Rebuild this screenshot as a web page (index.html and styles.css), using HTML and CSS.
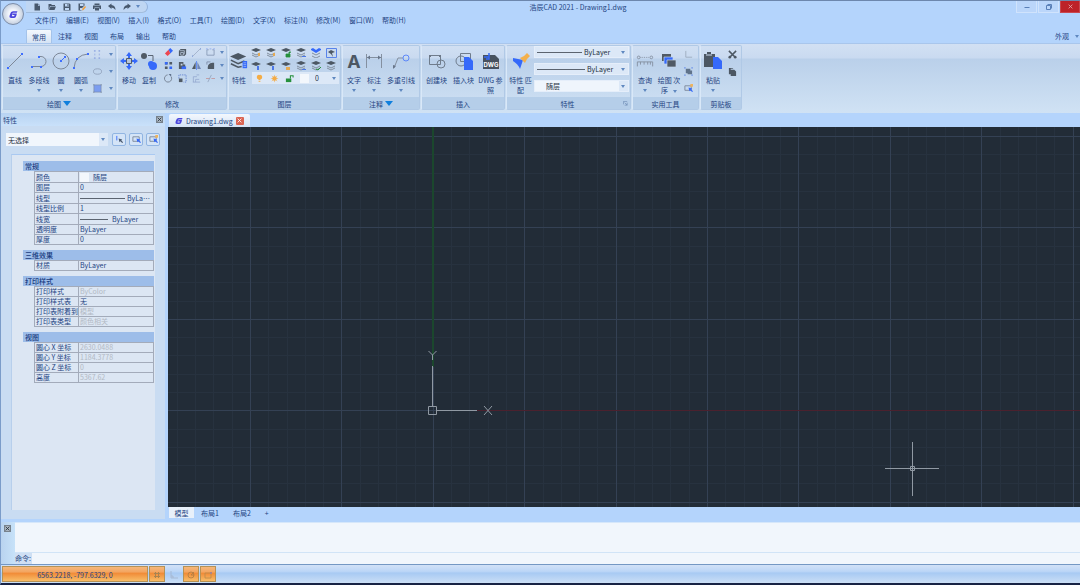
FILE: index.html
```html
<!DOCTYPE html>
<html lang="zh-CN">
<head>
<meta charset="utf-8">
<title>浩辰CAD 2021 - Drawing1.dwg</title>
<link rel="stylesheet" href="styles.css">
</head>
<body>
<svg class="sprite" aria-hidden="true">
  <symbol id="arrow" viewBox="0 0 4 3"><path d="M0 0h4L2 3z" fill="#5f88c0"/></symbol>
  <symbol id="expand" viewBox="0 0 8 5"><path d="M0 0h8L4 5z" fill="#0f7fdd"/></symbol>
  <symbol id="logo" viewBox="0 0 16 16"><path d="M15 2H7Q3 2 2 7L1 10q-1 4 3 4h5q3 0 4-4l1-4H7L6 9h4l-1 2H5l1-4q0-2 2-2h6z" fill="#4a45dc"/></symbol>
  <symbol id="close" viewBox="0 0 8 8"><path d="M1 1l6 6M7 1L1 7" fill="none" stroke="currentColor" stroke-width="1.3"/></symbol>
  <symbol id="new" viewBox="0 0 16 16"><path d="M3 1h7v5h4v9H3zM11 1l3 4h-3z"/></symbol>
  <symbol id="open" viewBox="0 0 16 16"><path d="M1 2h5l2 2h6v2H4l-2 7H1zM5 7h11l-3 7H2z"/></symbol>
  <symbol id="save" viewBox="0 0 16 16"><path d="M1 1h12l2 2v12H1zM4 2v5h8V2zM4 10v4h8v-4z" fill-rule="evenodd"/><path d="M9 2h2v4H9z"/></symbol>
  <symbol id="saveas" viewBox="0 0 16 16"><path d="M1 1h12v4L8 10H4v4h3v1H1zM4 2v4h7V2z" fill-rule="evenodd"/><path d="M8 15l1-4 5-5 2 2-5 6z" fill="#f0a040"/></symbol>
  <symbol id="print" viewBox="0 0 16 16"><path d="M3 1h10v3H3zM0 5h16v7h-3V9H3v3H0zM4 10h8v5H4z"/></symbol>
  <symbol id="undo" viewBox="0 0 16 16"><path d="M0 6l7-5v3q8 1 8 10-3-5-8-5v3z"/></symbol>
  <symbol id="redo" viewBox="0 0 16 16"><path d="M16 6L9 1v3Q1 5 1 14q3-5 8-5v3z"/></symbol>
  <symbol id="line" viewBox="0 0 18 18"><path d="M2 16L16 2" fill="none" stroke="#7d8898"/><path d="M1 15h2v2H1zM15 1h2v2h-2z" fill="#3f6fff"/></symbol>
  <symbol id="pline" viewBox="0 0 18 18"><path d="M2 14.500h9a5 5 0 0 0 0-10H9" fill="none" stroke="#7d8898"/><path d="M1 14h2v2H1zM8 4h2v2H8zM10 14h2v2h-2z" fill="#3f6fff"/></symbol>
  <symbol id="circle" viewBox="0 0 18 18"><circle cx="9" cy="9" r="8" fill="none" stroke="#7d8898"/><path d="M9 9l4-4" stroke="#3f6fff"/><path d="M8 8h2v2H8zM12 4h2v2h-2z" fill="#3f6fff"/></symbol>
  <symbol id="arc" viewBox="0 0 18 18"><path d="M2 16Q3 3 16 2" fill="none" stroke="#7d8898"/><path d="M1 15h2v2H1zM4 6h2v2H4zM15 1h2v2h-2z" fill="#3f6fff"/></symbol>
  <symbol id="points" viewBox="0 0 10 10"><path d="M2 0v2m0 2v2m0 2v2M7 0v2m0 2v2m0 2v2M1 1h2m3 0h2M1 9h2m3 0h2" stroke="#8ca3e0" fill="none" stroke-width=".8"/></symbol>
  <symbol id="ellipse" viewBox="0 0 10 10"><ellipse cx="5" cy="5" rx="4.500" ry="3" fill="none" stroke="#8695b0" stroke-width=".8"/></symbol>
  <symbol id="hatch" viewBox="0 0 10 10"><path d="M1 1h8v8H1z" fill="#7b9df0"/><path d="M0 1h10M0 9h10M1 0v10M9 0v10" stroke="#7b8aa4" stroke-width=".7"/></symbol>
  <symbol id="move" viewBox="0 0 18 18"><path d="M9 0l3 4h-2v3H8V4H6zM9 18l3-4h-2v-3H8v3H6zM0 9l4-3v2h3v2H4v2zM18 9l-4-3v2h-3v2h3v2z" fill="#3569fa"/><path d="M6.500 6.500h5v5h-5z" fill="#b8c6d9" stroke="#505b69"/></symbol>
  <symbol id="copy" viewBox="0 0 18 18"><circle cx="4" cy="4" r="3" fill="#505a65"/><path d="M8 3.500h5V9" fill="none" stroke="#5a6574"/><circle cx="11" cy="12" r="3" fill="#3569fa"/><circle cx="13" cy="14" r="4" fill="#3569fa"/></symbol>
  <symbol id="erase" viewBox="0 0 10 10"><path d="M5 2l2-2 3 3-3 3z" fill="#3569fa"/><path d="M5 2l2 4-3 3-3-3z" fill="#ed4751"/></symbol>
  <symbol id="box" viewBox="0 0 10 10"><path d="M1 3l2-2h6v6L7 9H1z" fill="#505a65"/><path d="M3 5h3v3H3zM2 3h5v4" fill="none" stroke="#c4d4e8" stroke-width=".8"/></symbol>
  <symbol id="dash" viewBox="0 0 10 10"><path d="M1 9L9 1" stroke="#97a6bf" stroke-width=".8"/><path d="M0 8h1v2H0zM9 0h1v2H9z" fill="#89a4d8"/></symbol>
  <symbol id="bracket" viewBox="0 0 10 10"><path d="M3 2H1v6h8V2H7" stroke="#8a9cb8" fill="none"/><path d="M4 1h2M0 1h2M8 1h2" stroke="#8facf0"/></symbol>
  <symbol id="array" viewBox="0 0 10 10"><path d="M1 1h3v3H1zM6 1h3v3H6zM1 6h3v3H1z" fill="#505a65"/><path d="M6 6h3v3H6zM1 1h3v3H1z" fill="#3569fa"/></symbol>
  <symbol id="align" viewBox="0 0 10 10"><path d="M1 1h5v3h2v5H1z" fill="#505a65"/><path d="M4 6h5v3H4z" fill="#3569fa"/><path d="M3 3h2v2H3z" fill="#c5d4e5"/></symbol>
  <symbol id="mirror" viewBox="0 0 10 10"><path d="M4 1v8H0z" fill="#505a65"/><path d="M6 1v8h4z" fill="#7187b5"/><path d="M5 0v10" stroke="#3569fa" stroke-width=".7"/></symbol>
  <symbol id="fillet" viewBox="0 0 10 10"><path d="M2 9V7q0-4 5-5h2v7z" fill="#505a65"/><path d="M1 4V1h4" fill="none" stroke="#8090aa"/></symbol>
  <symbol id="rotate" viewBox="0 0 10 10"><path d="M4 1a4 4 0 1 0 4 2" fill="none" stroke="#6b7686" stroke-width=".9"/><path d="M5 0h3v3z" fill="#60728c"/></symbol>
  <symbol id="scale" viewBox="0 0 10 10"><path d="M1 5V1h8v8H6" fill="none" stroke="#6382cf" stroke-dasharray="1.500 1"/><path d="M1 5h4v4H1z" fill="#505a65"/></symbol>
  <symbol id="offset" viewBox="0 0 10 10"><path d="M1.500 9V3h4M4 9V6h4M1 9h8M5 1h3" stroke="#8fa3cd" fill="none" stroke-width=".8"/></symbol>
  <symbol id="trim" viewBox="0 0 10 10"><path d="M0 5h4m2 0h4" stroke="#c2898c" stroke-width=".8"/><path d="M2 9L6 1" stroke="#8c9cb5" stroke-width=".8"/></symbol>
  <symbol id="layers" viewBox="0 0 20 18"><path d="M9 0l9 4-9 4-9-4z" fill="#4c5763"/><path d="M1 8l8 4 7-3M1 12l8 4 4-1" fill="none" stroke="#4c5763" stroke-width="1.700"/><path d="M14 9h5v8h-5z" fill="#3569fa"/><path d="M15 11h3m-3 2h3m-3 2h3" stroke="#b7cef2" stroke-width=".7"/></symbol>
  <symbol id="stack" viewBox="0 0 11 10"><path d="M5 0l5 2-5 2-5-2z" fill="#4c5763"/><path d="M1 5l4 2 4-2M1 7l4 2 4-2" fill="none" stroke="#7b8795" stroke-width=".9"/></symbol>
  <symbol id="stack-y" viewBox="0 0 11 10"><use href="#stack"/><path d="M7 5h2v3H7z" fill="#e4aa55"/></symbol>
  <symbol id="stack-g" viewBox="0 0 11 10"><path d="M5 0l5 2-5 2-5-2z" fill="#4c5763"/><path d="M5 6h4v3H5zM8 6V4h2" fill="#26903d" stroke="#26903d" stroke-width=".8"/></symbol>
  <symbol id="stack-b" viewBox="0 0 11 10"><use href="#stack"/><path d="M6 8.500h4" stroke="#4b77e8"/></symbol>
  <symbol id="stack-c" viewBox="0 0 11 10"><use href="#stack"/><path d="M5 8l2 1 3-3" fill="none" stroke="#26903d"/></symbol>
  <symbol id="stack-w" viewBox="0 0 11 10"><path d="M1 5l4 2 4-2M1 8l4 2 4-2" fill="none" stroke="#7b8795" stroke-width=".9"/><path d="M0 1l2-1 3 2 3-2 2 1v1L5 5 0 2z" fill="#3569fa"/></symbol>
  <symbol id="layer-frame" viewBox="0 0 11 10"><path d="M.5.500h10v9H.5z" fill="#c8d9ef" stroke="#5983eb"/><path d="M5 2l4 2-3 1 1 4-2-3-3-2z" fill="#4c5763"/></symbol>
  <symbol id="layer-one" viewBox="0 0 11 10"><path d="M5 1l5 2-5 2-5-2z" fill="#4c5763"/><path d="M6 5h2v4H6z" fill="#4b77e8"/></symbol>
  <symbol id="layer-lock" viewBox="0 0 11 10"><path d="M5 1l5 2-5 2-5-2z" fill="#4c5763"/><path d="M5 6h4v3H5z" fill="#e4aa55"/></symbol>
  <symbol id="bulb" viewBox="0 0 10 10"><path d="M5 1a2.500 2.500 0 0 1 1 5v1H4V6a2.500 2.500 0 0 1 1-5zM4 8h2v1H4z" fill="#f4ac45"/></symbol>
  <symbol id="sun" viewBox="0 0 10 10"><circle cx="5" cy="5" r="2.500" fill="#f4ac45"/><path d="M5 1v8M1 5h8M2 2l6 6M8 2L2 8" stroke="#f4ac45" stroke-width=".6"/></symbol>
  <symbol id="unlock" viewBox="0 0 10 10"><path d="M1 5h6v4H1z" fill="#26903d"/><path d="M6 5V2h3v2" fill="none" stroke="#26903d" stroke-width="1.200"/></symbol>
  <symbol id="text-a" viewBox="0 0 18 18"><text x="9" y="16" text-anchor="middle" font-family="Inter, sans-serif" font-size="18" font-weight="700" fill="#4c5763">A</text></symbol>
  <symbol id="dim" viewBox="0 0 18 18"><path d="M1.500 2v14M16.500 2v14M2 5.500h14" stroke="#8490a0" fill="none"/><path d="M2 5.500l3-2v4zM16 5.500l-3-2v4z" fill="#68768a"/></symbol>
  <symbol id="leader" viewBox="0 0 18 18"><path d="M2 16L6 6h5" fill="none" stroke="#8490a0"/><path d="M1 13l3 1-3 3z" fill="#68768a"/><circle cx="14" cy="6" r="3" fill="none" stroke="#5d88fa"/></symbol>
  <symbol id="block" viewBox="0 0 18 18"><path d="M1.500 3.500h11v9h-11z" fill="none" stroke="#6f7c8c"/><circle cx="13" cy="12" r="4" fill="none" stroke="#6f7c8c"/><path d="M1 3h2v2H1zM11 3h2v2h-2z" fill="#6c7888"/></symbol>
  <symbol id="insert" viewBox="0 0 18 18"><circle cx="6" cy="9" r="5" fill="none" stroke="#6f7c8c"/><path d="M5.500 1.500h10v8h-10z" fill="none" stroke="#6f7c8c"/><path d="M9 5h5l4 4v9H9z" fill="#3569fa"/></symbol>
  <symbol id="dwg" viewBox="0 0 18 18"><path d="M1 3h12l4 4v10H1z" fill="#47525f"/><path d="M2 5h5V1M7 1v6H4" fill="none" stroke="#3569fa" stroke-width="1.500"/><text x="9" y="15" text-anchor="middle" font-family="Inter, sans-serif" font-size="6" font-weight="700" fill="#fff">DWG</text></symbol>
  <symbol id="match" viewBox="0 0 18 18"><path d="M1 6l10 2-3 9q-2-5-7-8z" fill="#3569fa"/><path d="M8 6l4-2 3-3 3 3-3 3-2 4z" fill="#f4b04b"/></symbol>
  <symbol id="measure" viewBox="0 0 20 18"><circle cx="3" cy="5" r="1.500" fill="none" stroke="#8490a0"/><circle cx="17" cy="5" r="1.500" fill="none" stroke="#8490a0"/><path d="M5 5h10" stroke="#8490a0" stroke-dasharray="1"/><path d="M1.500 15v-5h17v5M5 10v3m4-3v3m4-3v3m3-3v3" fill="none" stroke="#8490a0"/></symbol>
  <symbol id="order" viewBox="0 0 18 18"><path d="M2 2h9v7H2z" fill="#505a65"/><path d="M4 5h9v7H4z" fill="#3569fa" stroke="#c5d7ed" stroke-width=".7"/><path d="M7 8h9v7H7z" fill="#505a65" stroke="#c5d7ed" stroke-width=".7"/></symbol>
  <symbol id="ucs" viewBox="0 0 10 10"><path d="M2 1v7h7" fill="none" stroke="#9dabc0"/></symbol>
  <symbol id="group" viewBox="0 0 10 10"><path d="M2 2h5v5H2zM4 4h5v4H4z" fill="#60738b"/><path d="M0 1h2M8 1h2M0 9h2M8 9h2" stroke="#5c85e8" fill="none"/></symbol>
  <symbol id="pick" viewBox="0 0 10 10"><path d="M1 2h7v5H1z" fill="none" stroke="#7b8798"/><path d="M5 4l4 1-1 1 2 2-1 1-2-2-1 1z" fill="#3569fa"/></symbol>
  <symbol id="qpick" viewBox="0 0 10 10"><use href="#pick"/><path d="M7 0h3v3H7z" fill="#efb45d"/></symbol>
  <symbol id="pickadd" viewBox="0 0 10 10"><path d="M2 1v5" stroke="#3569fa"/><path d="M4 4l4 1-1 1 2 2-1 1-2-2-1 1z" fill="#48586d"/></symbol>
  <symbol id="paste" viewBox="0 0 18 18"><path d="M0 2h3V0h4v2h4v13H0z" fill="#4c5763"/><path d="M2 3h6" stroke="#c9d8eb"/><path d="M9 5h5l4 4v8H9z" fill="#3569fa"/></symbol>
  <symbol id="cut" viewBox="0 0 10 10"><path d="M1 1l7 7M9 1L2 8" stroke="#4c5763" stroke-width="1.700"/><circle cx="2" cy="8" r="1.500" fill="#4c5763"/><circle cx="8" cy="8" r="1.500" fill="#4c5763"/></symbol>
  <symbol id="pages" viewBox="0 0 10 10"><path d="M1 1h4l1 1H3v6H1zM3 3h4l2 2v5H3z" fill="#4c5763"/></symbol>
  <symbol id="launch" viewBox="0 0 6 6"><path d="M.5 4V.500H5M2 2l3 3M5 2v3H2" fill="none" stroke="#6e8db5" stroke-width=".8"/></symbol>
  <symbol id="grid" viewBox="0 0 10 10"><path d="M3.500 2v6M6.500 2v6M2 3.500h6M2 6.500h6" stroke="#a98450"/></symbol>
  <symbol id="ortho" viewBox="0 0 10 10"><path d="M2 1v7h7M4 8V6H2" fill="none" stroke="#a3b4cc" stroke-width=".8"/></symbol>
  <symbol id="polar" viewBox="0 0 10 10"><circle cx="5" cy="5" r="3" fill="none" stroke="#b07c42" stroke-width=".8"/><path d="M5 5l3-3M5 5h3" stroke="#b07c42" stroke-width=".8"/></symbol>
  <symbol id="snap" viewBox="0 0 10 10"><path d="M2 3h6v5H2z" fill="none" stroke="#b98a4c" stroke-width=".8"/><path d="M7 2h2v2H7z" fill="#a9858a"/></symbol>
</svg>

<div class="app">
  <header class="header">
    <button class="app-button" aria-label="应用程序菜单"><svg><use href="#logo"/></svg></button>
    <div class="header-rows">
      <div class="title-row">
        <div class="quick">
          <button aria-label="新建"><svg><use href="#new"/></svg></button>
          <button aria-label="打开"><svg><use href="#open"/></svg></button>
          <button aria-label="保存"><svg><use href="#save"/></svg></button>
          <button aria-label="另存为"><svg><use href="#saveas"/></svg></button>
          <button aria-label="打印"><svg><use href="#print"/></svg></button>
          <button aria-label="撤销"><svg><use href="#undo"/></svg></button>
          <button aria-label="重做"><svg><use href="#redo"/></svg></button>
          <button class="quick-more" aria-label="更多"><svg class="caret"><use href="#arrow"/></svg></button>
        </div>
        <h1>浩辰CAD 2021 - Drawing1.dwg</h1>
        <div class="window-buttons">
          <button aria-label="最小化"><svg viewBox="0 0 8 8"><path d="M1.500 4.500h5" stroke="#5a80b8"/></svg></button>
          <button aria-label="还原"><svg viewBox="0 0 8 8"><path d="M1.500 2.500h4v4h-4zM2.500 1.500h4v4" fill="none" stroke="#5a80b8"/></svg></button>
          <button class="window-close" aria-label="关闭"><svg><use href="#close"/></svg></button>
        </div>
      </div>
      <nav class="menu">
        <button>文件(F)</button><button>编辑(E)</button><button>视图(V)</button><button>插入(I)</button><button>格式(O)</button><button>工具(T)</button><button>绘图(D)</button><button>文字(X)</button><button>标注(N)</button><button>修改(M)</button><button>窗口(W)</button><button>帮助(H)</button>
      </nav>
      <div class="ribbon-tabs">
        <button class="active">常用</button><button>注释</button><button>视图</button><button>布局</button><button>输出</button><button>帮助</button>
        <button class="appearance">外观<svg class="caret"><use href="#arrow"/></svg></button>
      </div>
    </div>
  </header>

  <div class="ribbon">
    <section class="group draw">
      <div class="tools">
        <button class="big w24"><svg><use href="#line"/></svg>直线</button>
        <button class="big w24"><svg><use href="#pline"/></svg>多段线<svg class="caret"><use href="#arrow"/></svg></button>
        <button class="big w20"><svg><use href="#circle"/></svg>圆<svg class="caret"><use href="#arrow"/></svg></button>
        <button class="big w20"><svg><use href="#arc"/></svg>圆弧<svg class="caret"><use href="#arrow"/></svg></button>
        <div class="stack-tools">
          <button aria-label="点"><svg><use href="#points"/></svg><svg class="caret"><use href="#arrow"/></svg></button>
          <button aria-label="椭圆"><svg><use href="#ellipse"/></svg><svg class="caret"><use href="#arrow"/></svg></button>
          <button aria-label="填充"><svg><use href="#hatch"/></svg><svg class="caret"><use href="#arrow"/></svg></button>
        </div>
      </div>
      <h2>绘图<svg><use href="#expand"/></svg></h2>
    </section>
    <section class="group modify">
      <div class="tools">
        <button class="big w20"><svg><use href="#move"/></svg>移动</button>
        <button class="big w20"><svg><use href="#copy"/></svg>复制</button>
        <div class="small-grid modify-grid">
          <button aria-label="删除"><svg><use href="#erase"/></svg></button><button aria-label="分解"><svg><use href="#box"/></svg></button><button aria-label="拉长"><svg><use href="#dash"/></svg></button><button aria-label="打断"><svg><use href="#bracket"/></svg></button><button aria-label="打断选项"><svg class="caret"><use href="#arrow"/></svg></button>
          <button aria-label="阵列"><svg><use href="#array"/></svg></button><button aria-label="对齐"><svg><use href="#align"/></svg></button><button aria-label="镜像"><svg><use href="#mirror"/></svg></button><button aria-label="圆角"><svg><use href="#fillet"/></svg></button><button aria-label="圆角选项"><svg class="caret"><use href="#arrow"/></svg></button>
          <button aria-label="旋转"><svg><use href="#rotate"/></svg></button><button aria-label="缩放"><svg><use href="#scale"/></svg></button><button aria-label="偏移"><svg><use href="#offset"/></svg></button><button aria-label="修剪"><svg><use href="#trim"/></svg></button><button aria-label="修剪选项"><svg class="caret"><use href="#arrow"/></svg></button>
        </div>
      </div>
      <h2>修改</h2>
    </section>
    <section class="group layer">
      <div class="tools">
        <button class="big w20"><svg><use href="#layers"/></svg>特性</button>
        <div class="layer-side">
          <div class="small-grid layer-grid">
            <button aria-label="关闭图层"><svg><use href="#stack-y"/></svg></button><button aria-label="冻结图层"><svg><use href="#stack-y"/></svg></button><button aria-label="解锁图层"><svg><use href="#stack-g"/></svg></button><button aria-label="匹配图层"><svg><use href="#stack-b"/></svg></button><button aria-label="图层漫游"><svg><use href="#stack-w"/></svg></button><button aria-label="图层隔离"><svg><use href="#layer-frame"/></svg></button>
            <button aria-label="打开图层"><svg><use href="#layer-one"/></svg></button><button aria-label="解冻图层"><svg><use href="#layer-one"/></svg></button><button aria-label="锁定图层"><svg><use href="#layer-lock"/></svg></button><button aria-label="当前图层"><svg><use href="#stack-b"/></svg></button><button aria-label="合并图层"><svg><use href="#stack-c"/></svg></button><button aria-label="上一图层"><svg><use href="#stack"/></svg></button>
          </div>
          <div class="combo layer-combo">
            <svg class="mini"><use href="#bulb"/></svg><svg class="mini"><use href="#sun"/></svg><svg class="mini"><use href="#unlock"/></svg><span class="swatch"></span>
            <select aria-label="图层"><option>0</option></select><svg class="caret"><use href="#arrow"/></svg>
          </div>
        </div>
      </div>
      <h2>图层</h2>
    </section>
    <section class="group annotate">
      <div class="tools">
        <button class="big w20"><svg><use href="#text-a"/></svg>文字<svg class="caret"><use href="#arrow"/></svg></button>
        <button class="big w20"><svg><use href="#dim"/></svg>标注<svg class="caret"><use href="#arrow"/></svg></button>
        <button class="big w34"><svg><use href="#leader"/></svg>多重引线<svg class="caret"><use href="#arrow"/></svg></button>
      </div>
      <h2>注释<svg><use href="#expand"/></svg></h2>
    </section>
    <section class="group insert">
      <div class="tools">
        <button class="big w27"><svg><use href="#block"/></svg>创建块</button>
        <button class="big w27"><svg><use href="#insert"/></svg>插入块</button>
        <button class="big w27"><svg><use href="#dwg"/></svg><span>DWG 参<br>照</span></button>
      </div>
      <h2>插入</h2>
    </section>
    <section class="group props">
      <div class="tools">
        <button class="big w27"><svg><use href="#match"/></svg><span>特性 匹<br>配</span></button>
        <div class="prop-combos">
          <div class="combo"><span class="rule"></span><select aria-label="线型"><option>ByLayer</option></select><svg class="caret"><use href="#arrow"/></svg></div>
          <div class="combo"><span class="rule long"></span><select aria-label="线宽"><option>ByLayer</option></select><svg class="caret"><use href="#arrow"/></svg></div>
          <div class="combo color"><select aria-label="颜色"><option>随层</option></select><svg class="caret"><use href="#arrow"/></svg></div>
        </div>
      </div>
      <h2>特性<button class="launcher" aria-label="特性选项"><svg><use href="#launch"/></svg></button></h2>
    </section>
    <section class="group utils">
      <div class="tools">
        <button class="big w24"><svg><use href="#measure"/></svg>查询<svg class="caret"><use href="#arrow"/></svg></button>
        <button class="big w24"><svg><use href="#order"/></svg><span>绘图 次<br>序<svg class="caret inline"><use href="#arrow"/></svg></span></button>
        <div class="stack-tools narrow">
          <button aria-label="坐标"><svg><use href="#ucs"/></svg></button><button aria-label="组"><svg><use href="#group"/></svg></button><button aria-label="快速选择"><svg><use href="#qpick"/></svg></button>
        </div>
      </div>
      <h2>实用工具</h2>
    </section>
    <section class="group clip">
      <div class="tools">
        <button class="big w24"><svg><use href="#paste"/></svg>粘贴<svg class="caret"><use href="#arrow"/></svg></button>
        <div class="stack-tools narrow">
          <button aria-label="剪切"><svg><use href="#cut"/></svg></button><button aria-label="复制到剪贴板"><svg><use href="#pages"/></svg></button>
        </div>
      </div>
      <h2>剪贴板</h2>
    </section>
  </div>

  <main class="workspace">
    <aside class="palette">
      <div class="palette-title"><h2>特性</h2><button class="tiny-close" aria-label="关闭特性"><svg><use href="#close"/></svg></button></div>
      <div class="selector">
        <div class="combo"><select aria-label="选择对象"><option>无选择</option></select><svg class="caret"><use href="#arrow"/></svg></div>
        <button aria-label="切换选择"><svg><use href="#pickadd"/></svg></button>
        <button aria-label="选择"><svg><use href="#pick"/></svg></button>
        <button aria-label="快速选择"><svg><use href="#qpick"/></svg></button>
      </div>
      <div class="property-list">
        <section><h3>常规</h3><table>
          <tr class="tall"><th scope="row">颜色</th><td><span class="value"><span class="swatch"></span>随层</span></td></tr>
          <tr><th scope="row">图层</th><td>0</td></tr>
          <tr class="tall"><th scope="row">线型</th><td><span class="value"><span class="rule"></span>ByLa…</span></td></tr>
          <tr><th scope="row">线型比例</th><td>1</td></tr>
          <tr class="tall"><th scope="row">线宽</th><td><span class="value"><span class="rule short"></span>ByLayer</span></td></tr>
          <tr><th scope="row">透明度</th><td>ByLayer</td></tr>
          <tr><th scope="row">厚度</th><td>0</td></tr>
        </table></section>
        <section><h3>三维效果</h3><table>
          <tr><th scope="row">材质</th><td>ByLayer</td></tr>
        </table></section>
        <section><h3>打印样式</h3><table>
          <tr><th scope="row">打印样式</th><td class="muted">ByColor</td></tr>
          <tr><th scope="row">打印样式表</th><td>无</td></tr>
          <tr><th scope="row">打印表附着到</th><td class="muted">模型</td></tr>
          <tr><th scope="row">打印表类型</th><td class="muted">颜色相关</td></tr>
        </table></section>
        <section><h3>视图</h3><table>
          <tr><th scope="row">圆心 X 坐标</th><td class="muted">2630.0488</td></tr>
          <tr><th scope="row">圆心 Y 坐标</th><td class="muted">1184.3778</td></tr>
          <tr><th scope="row">圆心 Z 坐标</th><td class="muted">0</td></tr>
          <tr><th scope="row">高度</th><td class="muted">5367.62</td></tr>
        </table></section>
      </div>
    </aside>
    <div class="editor">
      <div class="file-tabs">
        <div class="file-tab"><svg class="mini"><use href="#logo"/></svg><button>Drawing1.dwg</button><button class="tab-close" aria-label="关闭图形"><svg><use href="#close"/></svg></button></div>
      </div>
      <svg class="drawing" role="img" aria-label="绘图区">
        <defs>
          <pattern id="cells" x="82" y="9" width="457" height="457" patternUnits="userSpaceOnUse">
            <path fill="none" stroke="#27323f" d="M18.500 0v457M37.500 0v457M55.500 0v457M73.500 0v457M110.500 0v457M128.500 0v457M146.500 0v457M165.500 0v457M201.500 0v457M219.500 0v457M238.500 0v457M256.500 0v457M293.500 0v457M311.500 0v457M329.500 0v457M347.500 0v457M384.500 0v457M402.500 0v457M420.500 0v457M439.500 0v457M0 18.500h457M0 37.500h457M0 55.500h457M0 73.500h457M0 110.500h457M0 128.500h457M0 146.500h457M0 165.500h457M0 201.500h457M0 219.500h457M0 238.500h457M0 256.500h457M0 293.500h457M0 311.500h457M0 329.500h457M0 347.500h457M0 384.500h457M0 402.500h457M0 420.500h457M0 439.500h457"/>
            <path fill="none" stroke="#344154" d="M.5 0v457M91.500 0v457M183.500 0v457M274.500 0v457M366.500 0v457M0 .5h457M0 91.500h457M0 183.500h457M0 274.500h457M0 366.500h457"/>
          </pattern>
        </defs>
        <rect width="100%" height="100%" fill="#222c37"/>
        <rect width="100%" height="100%" fill="url(#cells)"/>
        <path d="M265 0v240" stroke="#1b472d" stroke-width="2"/>
        <path d="M309 283.500h1600" stroke="#4b212e"/>
        <g fill="none" stroke="#9099a3">
          <path d="M264.500 280v-41M268 283.500h41M260.500 279.500h8v8h-8z"/>
          <path d="M260.500 224l4 4 4-4M264.500 228v5M316 279l8 9M324 279l-8 9"/>
          <path d="M717 341.500h54M744.500 315v54M742.500 339.500h4v4h-4z"/>
        </g>
      </svg>
      <div class="layout-tabs"><button class="active">模型</button><button>布局1</button><button>布局2</button><button aria-label="新建布局">+</button></div>
    </div>
  </main>

  <section class="command">
    <div class="command-grip"><button class="tiny-close" aria-label="关闭命令行"><svg><use href="#close"/></svg></button></div>
    <div class="command-body"><div class="log"></div>
      <div class="prompt"><label for="command-input">命令:</label><input id="command-input" type="text"></div>
    </div>
  </section>
  <footer class="status">
    <button class="coords on">6563.2218, -797.6329, 0</button>
    <button class="on" aria-label="栅格"><svg><use href="#grid"/></svg></button>
    <button aria-label="正交"><svg><use href="#ortho"/></svg></button>
    <button class="on" aria-label="极轴"><svg><use href="#polar"/></svg></button>
    <button class="on" aria-label="对象捕捉"><svg><use href="#snap"/></svg></button>
  </footer>
</div>
</body>
</html>
```
FILE: styles.css
```css
* { box-sizing: border-box; }
body { margin: 0; background: #182344; }
body, button, select, input, table {
  font-family: "Noto Sans CJK SC", "Noto Sans", sans-serif;
  font-size: 7px;
  line-height: 10px;
  color: #244482;
}
button { margin: 0; padding: 0; border: 0; background: none; white-space: nowrap; }
h1, h2, h3 { margin: 0; font-size: 7px; font-weight: 400; }
svg { display: block; flex: none; }
.sprite { display: none; }
.caret { width: 4px; height: 3px; }
.mini { width: 9px; height: 9px; }

.app {
  display: flex;
  flex-direction: column;
  height: 100vh;
  border-top: 1px solid #6d87ad;
  border-left: 1px solid #7b9cc9;
  border-bottom: 2px solid #182344;
  background: #b4d4fc;
}

/* Title, menus and ribbon tabs */
.header { display: flex; height: 42px; }
.app-button {
  display: grid;
  place-items: center;
  flex: none;
  width: 22px;
  height: 22px;
  margin: 2px 2px 0 1px;
  border: 1px solid #7d8da8;
  border-radius: 50%;
  background: radial-gradient(circle, #f3f6fc 30%, #c2cddd 75%, #eaf1fa);
}
.app-button svg { width: 9px; height: 9px; }
.header-rows { flex: 1; min-width: 0; }
.title-row { display: flex; height: 12px; }
.quick {
  display: flex;
  align-items: center;
  height: 12px;
  padding: 0 5px 0 3px;
  border-right: 1px solid #93b2dc;
  border-bottom: 1px solid #a2bddd;
  border-radius: 0 8px 8px 0;
  background: #bfd6f3;
}
.quick button { display: grid; place-items: center; width: 15px; height: 11px; }
.quick svg { width: 8px; height: 8px; fill: #48586d; }
.quick .quick-more { width: 8px; }
.quick .caret { width: 4px; height: 3px; }
.title-row h1 { flex: 1; padding: 1px 8px 0 0; text-align: center; }
.window-buttons { display: flex; height: 12px; gap: 1px; }
.window-buttons button { display: grid; place-items: center; width: 21px; background: #bbd6fa; border: 1px solid #d0e3fc; border-top: 0; }
.window-buttons svg { width: 8px; height: 8px; }
.window-buttons .window-close { width: 20px; background: #bd2228; border-color: #c9474e; color: #e8aaae; }
.window-close .window-close svg, .window-buttons .window-close svg { width: 5px; height: 5px; }
.menu { display: flex; justify-content: space-between; width: 380px; height: 16px; padding: 2px 0 0 9px; }
.menu button { height: 10px; }
.ribbon-tabs { display: flex; height: 14px; }
.ribbon-tabs button { width: 26px; border-radius: 2px 2px 0 0; }
.ribbon-tabs .active { background: linear-gradient(#f4f8fd, #d5e3f4); border: 1px solid #a4c3ea; border-bottom: 0; }
.ribbon-tabs .appearance { display: flex; align-items: center; justify-content: flex-end; gap: 6px; width: 40px; margin-left: auto; padding-right: 1px; }

/* Ribbon */
.ribbon {
  display: flex;
  gap: 1px;
  flex: none;
  height: 70px;
  padding: 1px 0 3px 1px;
  border-top: 1px solid #a9c6ec;
  background: linear-gradient(#d2e0f3 0, #c9daf0 14px, #bad0ea 15px, #d0e2f4 100%);
}
.group {
  display: flex;
  flex-direction: column;
  flex: none;
  border: 1px solid #b0c9e6;
  border-left-color: #d9e8f8;
  border-radius: 2px;
}
.tools { display: flex; flex: 1; min-height: 0; }
.group > h2 {
  display: flex;
  align-items: center;
  justify-content: center;
  gap: 2px;
  height: 12px;
  padding-top: 1px;
  background: #b5cee9;
}
.group > h2 > svg { width: 8px; height: 5px; }
.draw { width: 114px; }
.modify { width: 110px; }
.layer { width: 113px; }
.annotate { width: 78px; }
.insert { width: 84px; }
.props { width: 125px; }
.utils { width: 67px; }
.clip { width: 42px; }
.big {
  display: flex;
  flex-direction: column;
  align-items: center;
  flex: none;
  padding-top: 6px;
}
.big > svg:first-child { width: 18px; height: 18px; margin-bottom: 5px; }
.big > .caret { margin-top: 4px; }
.w20 { width: 20px; }
.w24 { width: 24px; }
.w27 { width: 27px; }
.w34 { width: 34px; }
.caret.inline { display: inline-block; margin-left: 5px; }
.stack-tools { display: flex; flex-direction: column; gap: 7px; padding: 3px 0 0 2px; }
.stack-tools button { display: flex; align-items: center; gap: 7px; height: 10px; }
.stack-tools svg:first-child { width: 9px; height: 9px; }
.stack-tools.narrow { padding-left: 3px; }
.small-grid { display: grid; align-content: start; }
.small-grid button { display: grid; place-items: center; }
.small-grid svg { width: 9px; height: 9px; }
.small-grid .caret { width: 4px; height: 3px; }
.modify-grid { grid-template-columns: repeat(4, 14px) 9px; grid-auto-rows: 13px; padding-left: 2px; }
.modify .tools { padding-left: 1px; }
.layer-side { flex: 1; padding-right: 1px; }
.layer-grid { grid-template-columns: repeat(6, 15px); grid-auto-rows: 13px; }
.layer-grid svg { width: 11px; height: 10px; }
.annotate .tools, .insert .tools { padding-left: 1px; }

.combo { display: flex; align-items: center; height: 12px; padding-right: 3px; background: #dce8f7; }
.combo select {
  flex: 1;
  min-width: 0;
  height: 10px;
  padding: 0;
  border: 0;
  outline: 0;
  appearance: none;
  background: none;
}
.layer-combo { gap: 6px; padding-left: 3px; margin-left: 3px; }
.swatch { width: 9px; height: 9px; background: #f3f7fc; }
.prop-combos { flex: 1; display: flex; flex-direction: column; gap: 5px; padding: 0 1px 0 0; }
.prop-combos .combo { padding-left: 2px; border: 1px solid #e5eefa; }
.prop-combos select { color: #25303f; }
.layer-combo select { color: #25303f; }
.rule { flex: none; width: 45px; height: 1px; margin-right: 2px; background: #5b6470; }
.rule.long { width: 48px; }
.prop-combos .color { padding-left: 11px; background: linear-gradient(90deg, #eff5fc 90%, #dce8f7 90%); }
.props > h2::before { content: ""; flex: 1; }
.props > h2 { gap: 0; }
.props .launcher { display: flex; flex: 1; justify-content: flex-end; padding-right: 2px; }
.launcher svg { width: 5px; height: 5px; }

/* Properties palette */
.workspace { display: flex; flex: 1; min-height: 0; gap: 3px; }
.palette { display: flex; flex-direction: column; flex: none; width: 164px; margin-bottom: 3px; background: #c9dcf2; }
.palette-title { display: flex; align-items: center; justify-content: space-between; height: 13px; padding: 0 2px; background: linear-gradient(#b8d3f2, #c9e1fa); }
.tiny-close { display: grid; place-items: center; width: 7px; height: 7px; border: 1px solid #78828c; background: #a8b3bf; color: #26313b; }
.tiny-close svg { width: 5px; height: 5px; }
.selector { display: flex; gap: 3px; padding: 7px 5px 0 5px; }
.selector .combo { flex: 1; height: 13px; padding-left: 2px; background: linear-gradient(90deg, #f1f6fc 91%, #dce8f7 91%); margin-right: 1px; }
.selector select { color: #25303f; }
.selector button { display: grid; place-items: center; width: 14px; height: 13px; border: 1px solid #91b5e2; border-radius: 2px; background: #d4e4f7; }
.selector svg { width: 9px; height: 9px; }
.selector .caret { width: 4px; height: 3px; }
.property-list {
  display: flex;
  flex-direction: column;
  flex: 1;
  min-height: 0;
  gap: 5px;
  margin: 8px 10px 9px 10px;
  padding: 6px 0 0 11px;
  overflow: hidden;
  border-top: 1px solid #a9c9f2;
  border-left: 1px solid #b7cfec;
  background: #dce6f3;
}
.property-list h3 { height: 10px; padding-left: 2px; background: #9dbde9; font-weight: 500; color: #173b80; }
.property-list section { padding-right: 1px; }
.property-list table { width: calc(100% - 11px); margin-left: 11px; border-collapse: collapse; table-layout: fixed; }
.property-list tr { height: 10px; }
.property-list tr.tall { height: 11px; }
.property-list th, .property-list td { padding: 0 0 0 1px; border: 1px solid #a3abba; font-weight: 400; text-align: left; line-height: 9px; white-space: nowrap; }
.property-list th { width: 44px; }
.property-list .muted { color: #b2b9c4; }
.value { display: flex; align-items: center; }
.value .swatch { margin-right: 4px; }
.value .rule.short { width: 28px; margin-right: 4px; }

/* Drawing area */
.editor { display: flex; flex-direction: column; flex: 1; min-width: 0; }
.file-tabs { display: flex; align-items: flex-end; height: 14px; padding-left: 1px; }
.file-tab { display: flex; align-items: center; gap: 3px; height: 13px; padding: 0 6px; border-radius: 2px 2px 0 0; background: linear-gradient(#f3f7fd, #d4e3f5); }
.file-tab .mini { width: 8px; height: 8px; }
.tab-close { display: grid; place-items: center; width: 8px; height: 8px; border-radius: 1px; background: #db6552; color: #fff; }
.tab-close svg { width: 5px; height: 5px; }
.drawing { flex: 1; width: 100%; min-height: 0; }
.layout-tabs { display: flex; height: 15px; padding-left: 1px; }
.layout-tabs button { height: 11px; padding: 0 7px; }
.layout-tabs .active { width: 25px; padding: 0; background: #e8f0fa; }

/* Command line and status */
.command { display: flex; flex: none; height: 42px; }
.command-grip { width: 14px; padding: 3px 0 0 3px; background: linear-gradient(90deg, #b9d3ef, #c7e2f9); }
.command-body { display: flex; flex-direction: column; flex: 1; background: #f1f6fc; border-top: 1px solid #d6e7fa; }
.log { flex: 1; }
.prompt { display: flex; height: 12px; border-top: 1px solid #d1e4f7; }
.prompt label { width: 17px; background: #cfdff3; }
.prompt input { flex: 1; min-width: 0; padding: 0; border: 0; outline: 0; background: #f1f6fc; }
.status { display: flex; gap: 1px; flex: none; height: 19px; padding: 1px; border-top: 1px solid #7498c4; background: linear-gradient(#d2e1f7 0, #bcd6f7 35%, #a8caf3 45%, #cbdff6 100%); }
.status button { display: grid; place-items: center; width: 16px; padding-top: 1px; }
.status .on { border: 1px solid #b69255; background: linear-gradient(#f5b77b 0, #f3a561 35%, #f18c38 45%, #f8bd68 100%); }
.status .coords { width: 146px; }
.status svg { width: 10px; height: 10px; }
```
